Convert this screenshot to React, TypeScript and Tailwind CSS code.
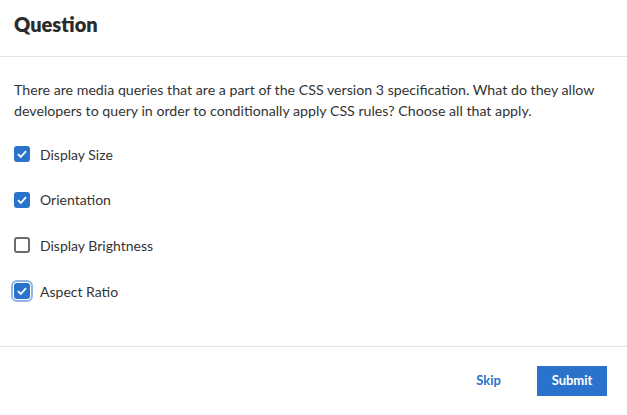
import { useState } from "react";

const options = [
  { label: "Display Size", checked: true },
  { label: "Orientation", checked: true },
  { label: "Display Brightness", checked: false },
  { label: "Aspect Ratio", checked: true, focused: true },
];

function Box({ checked, focused }: { checked: boolean; focused?: boolean }) {
  return (
    <span
      className={`flex items-center justify-center w-4 h-4 rounded-[3px] ${
        checked ? "bg-[#2a73cc]" : "border-2 border-[#6b6b6b] bg-white"
      } ${focused ? "outline outline-2 outline-offset-1 outline-[#8fb4e8]" : ""}`}
    >
      {checked && (
        <svg width="12" height="12" viewBox="0 0 12 12" fill="none">
          <path d="M2 6.2 4.8 9 10 3.2" stroke="white" strokeWidth="1.8" />
        </svg>
      )}
    </span>
  );
}

export default function App() {
  const [items, setItems] = useState(options);

  return (
    <div className="w-[627px] h-[415px] bg-white text-[#333] font-['Lato','Open_Sans',sans-serif] flex flex-col">
      <div className="h-[57px] border-b border-[#e3e3e3] flex items-center px-[14px] pb-[8px]">
        <h2 className="text-[20px] font-extrabold text-[#2b2b2b]">Question</h2>
      </div>

      <div className="flex-1 px-[14px] pt-[22px]">
        <p className="text-[14.2px] leading-[21px] text-[#333]">
          There are media queries that are a part of the CSS version 3
          specification. What do they allow developers to query in order to
          conditionally apply CSS rules? Choose all that apply.
        </p>
        <div className="mt-[25px] flex flex-col gap-[29.7px]">
          {items.map((o, i) => (
            <label
              key={o.label}
              className="flex items-center gap-[10px] h-4 text-[14px] cursor-pointer"
              onClick={() =>
                setItems(items.map((x, j) => (j === i ? { ...x, checked: !x.checked } : x)))
              }
            >
              <Box checked={o.checked} focused={o.focused} />
              <span>{o.label}</span>
            </label>
          ))}
        </div>
      </div>

      <div className="h-[69px] border-t border-[#e3e3e3] flex items-center justify-end gap-[36px] pr-[20px]">
        <button className="text-[13px] font-bold text-[#2a73cc]">Skip</button>
        <button className="w-[70px] h-[30px] bg-[#2a73cc] text-white text-[13px] font-bold">
          Submit
        </button>
      </div>
    </div>
  );
}
